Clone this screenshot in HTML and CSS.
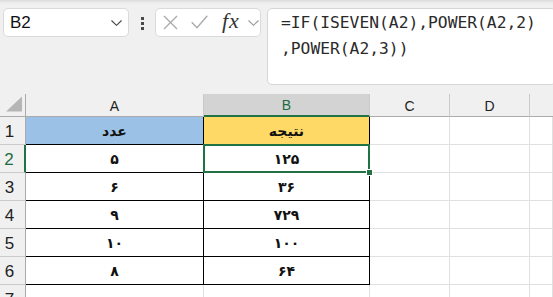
FILE: index.html
```html
<!DOCTYPE html>
<html lang="fa">
<head>
  <meta charset="UTF-8" />
  <meta name="viewport" content="width=device-width, initial-scale=1" />
  <title>Sheet - POWER</title>
  <link rel="stylesheet" href="styles.css">
</head>
<body>

<div class="toolbar">
  <div class="namebox">
    <span class="ref">B2</span>
    <svg class="chev" width="11" height="6" viewBox="0 0 11 6"><path d="M0.5 0.5 L5.5 5.3 L10.5 0.5" fill="none" stroke="#444" stroke-width="1.1"/></svg>
  </div>

  <div class="grip"><i></i><i></i><i></i></div>

  <div class="fxbox">
    <svg class="ico-x" width="15" height="15" viewBox="0 0 15 15"><path d="M1 1 L14 14 M14 1 L1 14" stroke="#ababab" stroke-width="1.4" fill="none"/></svg>
    <svg class="ico-ok" width="17" height="14" viewBox="0 0 17 14"><path d="M0.7 7.2 L6 12.8 L16.3 0.8" stroke="#ababab" stroke-width="1.4" fill="none"/></svg>
    <span class="fx">fx</span>
    <svg class="chev small" width="11" height="6" viewBox="0 0 11 6"><path d="M0.5 0.5 L5.5 5.3 L10.5 0.5" fill="none" stroke="#9a9a9a" stroke-width="1.1"/></svg>
  </div>

  <div class="formula">=IF(ISEVEN(A2),POWER(A2,2)<br>,POWER(A2,3))</div>
</div>

<div class="sheet">
  <!-- column headers -->
  <div class="corner">
    <svg width="17" height="16" viewBox="0 0 17 16"><polygon points="17,0 17,16 0,16" fill="#b5b5b5"/></svg>
  </div>
  <div class="colhdr">A</div>
  <div class="colhdr active">B</div>
  <div class="colhdr">C</div>
  <div class="colhdr">D</div>
  <div class="colhdr last"></div>

  <!-- row 1 -->
  <div class="rowhdr">1</div>
  <div class="cell boxed head blue">عدد</div>
  <div class="cell boxed head yellow">نتیجه</div>
  <div class="cell"></div>
  <div class="cell"></div>
  <div class="cell"></div>

  <!-- row 2 -->
  <div class="rowhdr active">2</div>
  <div class="cell boxed">۵</div>
  <div class="cell boxed sel">۱۲۵</div>
  <div class="cell"></div>
  <div class="cell"></div>
  <div class="cell"></div>

  <!-- row 3 -->
  <div class="rowhdr">3</div>
  <div class="cell boxed">۶</div>
  <div class="cell boxed">۳۶</div>
  <div class="cell"></div>
  <div class="cell"></div>
  <div class="cell"></div>

  <!-- row 4 -->
  <div class="rowhdr">4</div>
  <div class="cell boxed">۹</div>
  <div class="cell boxed">۷۲۹</div>
  <div class="cell"></div>
  <div class="cell"></div>
  <div class="cell"></div>

  <!-- row 5 -->
  <div class="rowhdr">5</div>
  <div class="cell boxed">۱۰</div>
  <div class="cell boxed">۱۰۰</div>
  <div class="cell"></div>
  <div class="cell"></div>
  <div class="cell"></div>

  <!-- row 6 -->
  <div class="rowhdr">6</div>
  <div class="cell boxed">۸</div>
  <div class="cell boxed">۶۴</div>
  <div class="cell"></div>
  <div class="cell"></div>
  <div class="cell"></div>

  <!-- row 7 -->
  <div class="rowhdr">7</div>
  <div class="cell"></div>
  <div class="cell"></div>
  <div class="cell"></div>
  <div class="cell"></div>
  <div class="cell"></div>
</div>

</body>
</html>
```

FILE: styles.css
```css
html, body {
  margin: 0; padding: 0;
  height: 100%;
  overflow: hidden;
}

body {
  background: linear-gradient(#d9d9d9 0, #e9e9e9 2px, #f0f0f0 4px);
  color: #222;
  font-family: 'Liberation Sans', Arial, sans-serif;
}

.toolbar {
  display: flex;
  align-items: flex-start;
  height: 85px;
  padding: 8px 0 0 3px;
  box-sizing: border-box;
}

.namebox {
  width: 126px;
  height: 29px;
  box-sizing: border-box;
  background: #fff;
  border: 1px solid #dadada;
  border-radius: 5px;
  display: flex;
  align-items: center;
  padding: 0 6px 0 6px;
}

.namebox .ref {
  flex: 1;
  font-size: 17px;
  color: #111;
  padding-top: 1px;
}

.grip {
  display: flex;
  flex-direction: column;
  gap: 2px;
  margin: 9px 11px 0 12px;
}

.grip i {
  display: block;
  width: 3px;
  height: 3px;
  background: #4a4a4a;
}

.fxbox {
  width: 106px;
  height: 29px;
  box-sizing: border-box;
  background: #fff;
  border: 1px solid #dadada;
  border-radius: 5px;
  display: flex;
  align-items: center;
  padding-left: 7px;
}

.ico-x { margin-right: 13px; }
.ico-ok { margin-right: 14px; margin-top: -1px; }

.fx {
  font-family: 'Liberation Serif', 'DejaVu Serif', serif;
  font-style: italic;
  font-size: 22px;
  color: #333;
  margin-top: -3px;
  margin-right: 8px;
  letter-spacing: 1px;
}

.formula {
  flex: 1;
  height: 77px;
  margin-left: 6px;
  margin-right: -3px;
  box-sizing: border-box;
  background: #fff;
  border: 1px solid #d6d6d6;
  border-radius: 5px;
  padding: 1px 0 0 13px;
  font-family: 'DejaVu Sans Mono', 'Liberation Mono', monospace;
  font-size: 16.3px;
  line-height: 26px;
  color: #2a2a2a;
}

.sheet {
  margin-top: 9px;
  display: grid;
  grid-template-columns: 26px 178px 166px 80px 80px 1fr;
  grid-template-rows: 23px repeat(7, 28px);
}

.sheet > div {
  box-sizing: border-box;
}

.corner {
  border-right: 1px solid #ababab;
  border-bottom: 1px solid #ababab;
  display: flex;
  align-items: flex-end;
  padding: 0 3px 4px 6px;
}

.colhdr {
  background: #f0f0f0;
  border-right: 1px solid #cacaca;
  border-bottom: 1px solid #ababab;
  display: flex;
  align-items: center;
  justify-content: center;
  font-size: 14px;
  color: #222;
  padding-top: 1px;
}

.colhdr.active {
  background: #d3d3d3;
  color: #1d6b42;
  border-bottom: 2px solid #217346;
}

.colhdr.last { border-right: none; }

.rowhdr {
  background: #f0f0f0;
  border-right: 1px solid #ababab;
  border-bottom: 1px solid #cacaca;
  display: flex;
  align-items: center;
  justify-content: center;
  padding: 2px 6px 0 0;
  font-size: 17px;
  color: #222;
}

.rowhdr.active {
  color: #1d6b42;
  border-right: 2px solid #217346;
}

.cell {
  background: #fff;
  border-right: 1px solid #e0e0e0;
  border-bottom: 1px solid #e0e0e0;
  display: flex;
  align-items: center;
  justify-content: center;
  direction: rtl;
  font-family: 'DejaVu Sans', 'Noto Sans', sans-serif;
  font-weight: 700;
  font-size: 14px;
  color: #111;
}

.cell.boxed {
  border-right-color: #000;
  border-bottom-color: #000;
}

.cell.blue { background: #9bc2e6; }
.cell.yellow { background: #ffd966; }

.cell.sel {
  position: relative;
  z-index: 2;
}

.cell.sel::after {
  content: '';
  position: absolute;
  left: -1px; top: -1px; right: -1px; bottom: -1px;
  border: 2px solid #217346;
}

.cell.sel::before {
  content: '';
  position: absolute;
  right: -3px;
  bottom: -3px;
  width: 5px;
  height: 5px;
  background: #217346;
  box-shadow: 0 0 0 1px #fff;
  z-index: 3;
}
```
